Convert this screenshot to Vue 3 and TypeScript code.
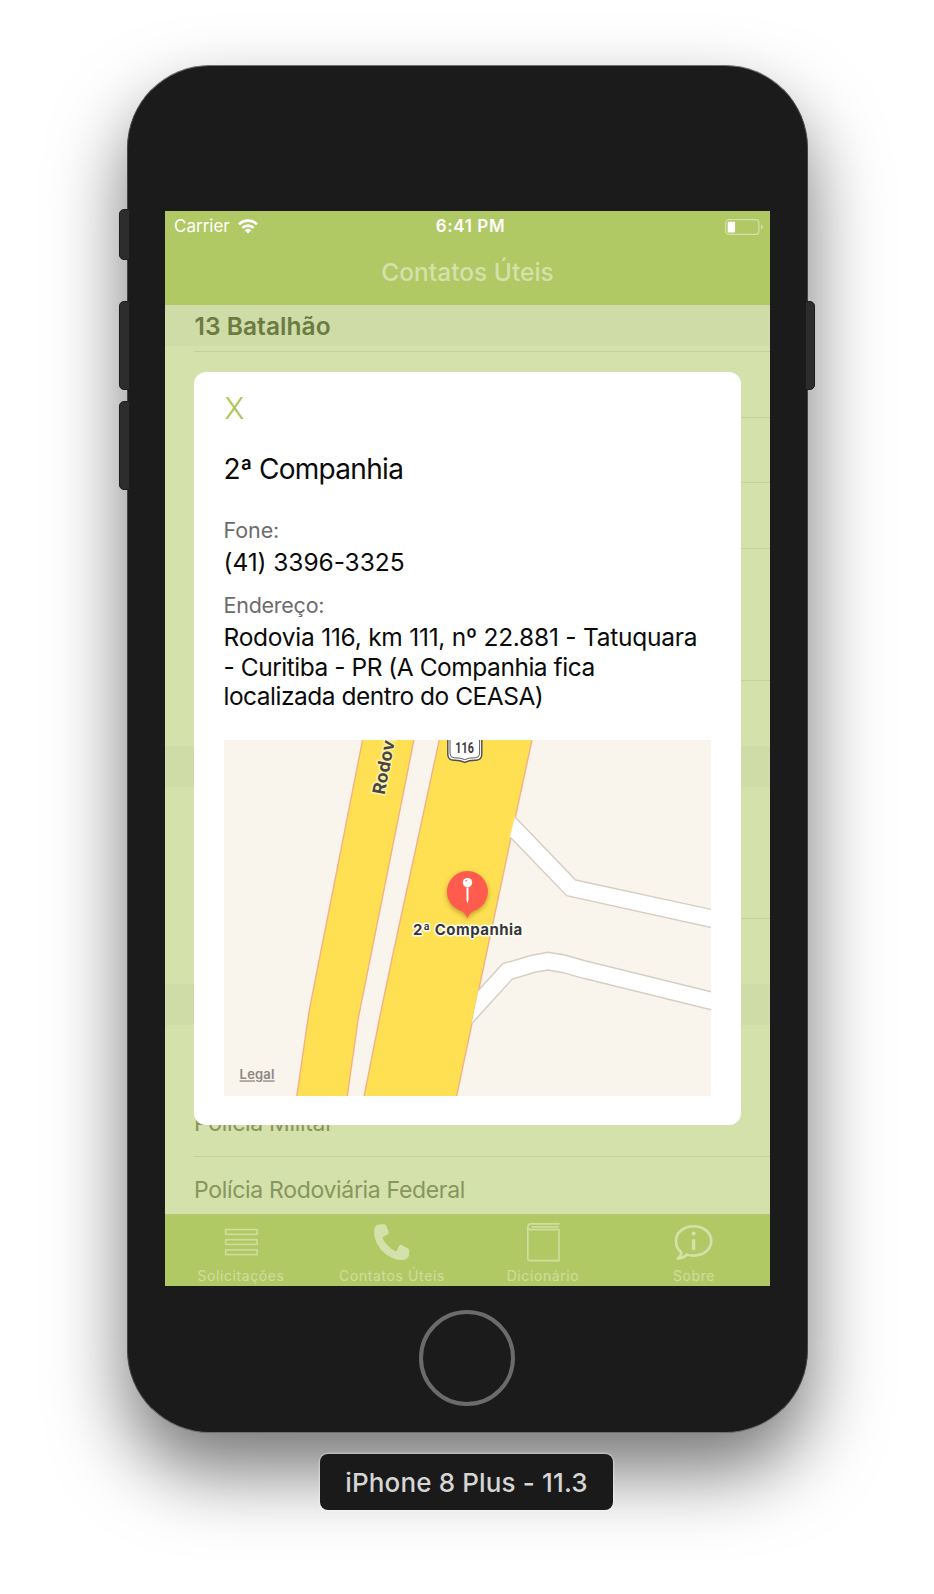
<script setup lang="ts">
interface ListItem {
  kind: 'header' | 'row'
  text?: string
  height: number
  line?: boolean
}

const items: ListItem[] = [
  { kind: 'header', text: '13 Batalhão', height: 41 },
  { kind: 'row', height: 6, line: true },
  { kind: 'row', height: 66, line: true },
  { kind: 'row', height: 65, line: true },
  { kind: 'row', height: 66, line: true },
  { kind: 'row', height: 66 },
  { kind: 'row', height: 66, line: true },
  { kind: 'row', height: 65 },
  { kind: 'header', height: 41 },
  { kind: 'row', height: 66 },
  { kind: 'row', height: 66, line: true },
  { kind: 'row', height: 65 },
  { kind: 'header', height: 41 },
  { kind: 'row', height: 66 },
  { kind: 'row', text: 'Polícia Militar', height: 66, line: true },
  { kind: 'row', text: 'Polícia Rodoviária Federal', height: 66 },
]

const tabs = [
  { id: 'requests', label: 'Solicitações' },
  { id: 'contacts', label: 'Contatos Úteis' },
  { id: 'dictionary', label: 'Dicionário' },
  { id: 'about', label: 'Sobre' },
]

const contact = {
  name: '2ª Companhia',
  phone: '(41) 3396-3325',
  address: [
    'Rodovia 116, km 111, nº 22.881 - Tatuquara',
    '- Curitiba - PR (A Companhia fica',
    'localizada dentro do CEASA)',
  ],
}
</script>

<template>
  <main class="stage">
    <div class="phone">
      <i class="key mute"></i>
      <i class="key vol-up"></i>
      <i class="key vol-down"></i>
      <i class="key power"></i>

      <section class="screen">
        <header class="status">
          <div class="carrier">
            <span>Carrier</span>
            <svg class="wifi" viewBox="0 0 20 15" width="20" height="15">
              <g fill="none" stroke="#fff" stroke-width="2.7">
                <path d="M1 5.4A12.7 12.7 0 0 1 19 5.4" />
                <path d="M4.3 8.9A8.1 8.1 0 0 1 15.7 8.9" />
              </g>
              <path d="M6.7 11.2A4.7 4.7 0 0 1 13.3 11.2L10 14.6Z" fill="#fff" />
            </svg>
          </div>
          <span class="time">6:41 PM</span>
          <svg class="battery" viewBox="0 0 38 16" width="38" height="16">
            <rect x=".7" y=".7" width="33.2" height="14.6" rx="3" fill="none" stroke="#d3e0a8" stroke-width="1.2" />
            <rect x="2.7" y="2.7" width="7.4" height="10.7" rx="1" fill="#fff" />
            <path d="M36 5.4Q37.9 6.2 37.9 8T36 10.6Z" fill="#d3e0a8" />
          </svg>
        </header>
        <h1 class="title">Contatos Úteis</h1>

        <div class="list">
          <div
            v-for="(item, i) in items"
            :key="i"
            :class="['item', item.kind, { line: item.line }]"
            :style="{ height: item.height + 'px' }"
          >
            <span v-if="item.text">{{ item.text }}</span>
          </div>
        </div>

        <nav class="tabs">
          <div v-for="tab in tabs" :key="tab.id" class="tab">
            <svg viewBox="0 0 40 42" width="40" height="42">
              <g v-if="tab.id === 'requests'" fill="none" stroke="#cfdd9e" stroke-width="1.6">
                <rect x="4.7" y="9.6" width="31.4" height="4.7" />
                <rect x="4.7" y="19.7" width="31.4" height="4.7" />
                <rect x="4.7" y="29.9" width="31.4" height="4.7" />
              </g>
              <path
                v-else-if="tab.id === 'contacts'"
                fill="#d4e1aa"
                d="M2.1 10.5Q2.4 6 5.6 4.7Q8.5 4 12 4.3Q14 4.6 14.8 6.7L16.8 12.4Q17 14 15.4 14.6L10.9 17Q10.2 17.6 10.6 18.4Q12 21.6 15.4 25Q19 29 23.2 31.3Q24.4 31.7 24.8 30.6L27.2 25.6Q28 24.5 29.4 25L35.8 28.2Q37.2 29 37.3 31Q37.5 35.5 36.2 37.2Q34 39.8 31 39.9Q25.5 40.4 20.5 38.2Q9.5 33 4.6 22.7Q1.8 17 2.1 10.5Z"
              />
              <g v-else-if="tab.id === 'dictionary'" fill="none" stroke="#d0de9f" stroke-width="1.6">
                <path d="M36.6 3.9H7.4Q4.8 4.2 4.8 6.8V38Q4.8 40.6 7 40.6H36V9.6H7Q4.9 9.2 4.8 6.8" />
                <path d="M35.5 6.9H8.5" stroke-width="1.7" />
              </g>
              <g v-else fill="none" stroke="#d4e1aa" stroke-width="2.6">
                <path
                  stroke-linejoin="round"
                  d="M7.2 32.2C3.9 29.6 2 25.7 2 21C2 12.4 9.8 6.2 19.6 6.2S37.2 12.4 37.2 21S29.4 35.6 19.6 35.6Q16 35.6 13.2 34.6Q8.6 38.6 3.6 38.7Q7.4 36.2 7.2 32.2Z"
                />
                <circle cx="19.6" cy="13.4" r="2" fill="#d4e1aa" stroke="none" />
                <path d="M19.6 19.3V29.9" stroke-width="3.4" />
              </g>
            </svg>
            <span>{{ tab.label }}</span>
          </div>
        </nav>

        <article class="card">
          <button class="close">X</button>
          <h2 class="name">{{ contact.name }}</h2>
          <p class="label phone-label">Fone:</p>
          <p class="value phone-value">{{ contact.phone }}</p>
          <p class="label address-label">Endereço:</p>
          <div class="value address">
            <p v-for="(part, i) in contact.address" :key="i" :class="'part' + i">{{ part }}</p>
          </div>
          <svg class="map" viewBox="224 740 487 356" width="487" height="356">
            <defs>
              <filter id="pinShadow" x="-40%" y="-40%" width="180%" height="180%">
                <feDropShadow dx="0" dy="2" stdDeviation="2.5" flood-color="#7a5a00" flood-opacity=".5" />
              </filter>
            </defs>
            <rect x="224" y="740" width="487" height="356" fill="#f9f4ec" />
            <path
              d="M363 738L309.3 1010L296.5 1098H347L358.3 1018L414.3 738Z"
              fill="#ffe052" stroke="#f4b183" stroke-width="1.4"
            />
            <path
              d="M439.7 738L391.5 961L380 1016L363.8 1098H456.2L472 1023.3L478.7 990L515.3 817.3L532.4 738Z"
              fill="#ffe052" stroke="#f4b183" stroke-width="1.4"
            />
            <path d="M514.800 816.8L575.7 880L713 909.8V928L566.7 895.7L509.800 837.3Z" fill="#fff" />
            <path
              d="M478.3 990.5L502.7 963.7L531.7 955.3L548 952.3L565 955L585 960.7L713 992.2V1010.2L583.3 978.3L563.3 972.7L548 970L535 972.3L512.3 979L471.6 1023.6Z"
              fill="#fff"
            />
            <g fill="none" stroke="#d6cdc3" stroke-width="1.4">
              <path d="M515.3 817.3L575.7 880L713 909.8" />
              <path d="M510.3 837.3L566.7 895.7L713 928" />
              <path d="M478.3 990.5L502.7 963.7L531.7 955.3L548 952.3L565 955L585 960.7L713 992.2" />
              <path d="M472 1023.3L512.3 979L535 972.3L548 970L563.3 972.7L583.3 978.3L713 1010.2" />
            </g>
            <text class="road" transform="translate(384.4 795.2) rotate(-79)">Rodovia</text>
            <path
              d="M447.8 736V754.5Q448 760 454 760.2Q460 760 464.7 762.4Q469.5 760 475.5 760.2Q481.6 760 481.8 754.5V736Z"
              fill="#fff" stroke="#4d4d4d" stroke-width="1.4"
            />
            <path
              d="M450 736V754Q450.2 757.6 454.4 757.8Q460.5 757.6 464.7 759.6Q469 757.6 475.2 757.8Q479.4 757.6 479.6 754V736"
              fill="none" stroke="#5c5c5c" stroke-width="1"
            />
            <text class="shield" x="464.6" y="752.9" text-anchor="middle" textLength="18.5" lengthAdjust="spacingAndGlyphs">116</text>
            <path
              filter="url(#pinShadow)"
              d="M467.4 918.4Q465.8 913.6 461.5 911.2A20.5 20.5 0 1 1 473.3 911.2Q469 913.6 467.4 918.4Z"
              fill="#ff5c4d"
            />
            <circle cx="467.5" cy="882.6" r="4.7" fill="#fff" />
            <circle cx="466.2" cy="880.7" r="1" fill="#ff8a80" />
            <path d="M466.5 887.5H468.5V900L467.5 903.4L466.5 900Z" fill="#fff" />
            <text class="place" x="467.9" y="934.6" text-anchor="middle">2ª Companhia</text>
            <text class="legal" x="239.6" y="1079.4">Legal</text>
          </svg>
        </article>
      </section>

      <div class="home"></div>
    </div>
    <div class="device">iPhone 8 Plus - 11.3</div>
  </main>
</template>

<style>
body {
  margin: 0;
  background: #fff;
}
</style>

<style scoped>
.stage {
  box-sizing: border-box;
  width: 934px;
  height: 1594px;
  padding-top: 65px;
  overflow: hidden;
  display: flex;
  flex-direction: column;
  align-items: center;
  background: #fff;
  font-family: Inter, 'Liberation Sans', sans-serif;
}
h1, h2, p {
  margin: 0;
  font-weight: 400;
}
.phone {
  position: relative;
  box-sizing: border-box;
  flex: none;
  width: 681px;
  height: 1368px;
  padding: 145px 0 0;
  display: flex;
  flex-direction: column;
  align-items: center;
  border: 1px solid #6f6f6f;
  border-left-color: #444;
  border-right-color: #444;
  border-radius: 83px;
  background: #1b1b1b;
  box-shadow: 0 38px 76px rgba(0, 0, 0, 0.54);
}
.key {
  position: absolute;
  box-sizing: border-box;
  left: -9px;
  width: 11px;
  height: 89px;
  border: 1px solid #1c1c1c;
  border-radius: 5px 0 0 5px;
  background: #2d2d2d;
}
.mute { top: 143px; height: 51px; }
.vol-up { top: 235px; }
.vol-down { top: 335px; }
.power {
  left: auto;
  right: -8px;
  top: 235px;
  width: 10px;
  border-radius: 0 5px 5px 0;
}
.screen {
  position: relative;
  width: 605px;
  height: 1075px;
  flex: none;
  display: flex;
  flex-direction: column;
  background: #d4e1aa;
}
.status {
  display: grid;
  grid-template-columns: 1fr auto 1fr;
  align-items: center;
  height: 30px;
  background: #b0c964;
  color: #fff;
  font-size: 17px;
  line-height: 31px;
}
.carrier {
  display: flex;
  align-items: center;
  gap: 8px;
  padding-left: 9.5px;
}
.time {
  font-weight: 600;
  letter-spacing: 0.6px;
  padding-left: 7px;
}
.battery {
  justify-self: end;
  margin-right: 7px;
}
.title {
  height: 64px;
  line-height: 62px;
  padding-left: 1px;
  background: #b0c964;
  color: #d4e1aa;
  text-align: center;
  font-size: 24.5px;
  font-weight: 500;
}
.list {
  flex: 1;
  min-height: 0;
  overflow: hidden;
}
.item {
  box-sizing: border-box;
  display: flex;
  align-items: center;
  padding-left: 30px;
  white-space: nowrap;
}
.header {
  background: #d0dca7;
  color: #6b7b41;
  font-size: 24.5px;
  font-weight: 600;
  letter-spacing: 0.05px;
}
.row {
  padding: 0 0 1px;
  margin-left: 29px;
  color: #86965c;
  font-size: 23px;
  letter-spacing: -0.32px;
}
.row span { margin-left: 0.5px; }
.line {
  border-bottom: 1px solid #c4d19b;
}
.tabs {
  box-sizing: border-box;
  flex: none;
  display: grid;
  grid-template-columns: repeat(4, 1fr);
  height: 72px;
  padding-left: 1px;
  border-top: 1px solid #b5c57e;
  background: #b0c964;
}
.tab {
  display: flex;
  flex-direction: column;
  align-items: center;
  padding-top: 5px;
  color: #d0dda1;
  font-size: 14px;
  font-weight: 400;
  line-height: 20px;
  letter-spacing: 0.6px;
}
.tab svg { flex: none; }
.tab span {
  height: 20px;
  margin-top: 4px;
}
.card {
  position: absolute;
  box-sizing: border-box;
  left: 29px;
  top: 161px;
  width: 547px;
  height: 753px;
  padding: 19px 30px 0;
  border-radius: 12px;
  background: #fff;
  color: #0b0b0b;
  white-space: nowrap;
}
.close {
  display: block;
  height: 36px;
  margin: -1px 0 0 1px;
  padding: 0;
  border: 0;
  background: none;
  color: #a9c750;
  font: 350 30px/36px Inter, sans-serif;
}
.name {
  margin: 26px 0 0;
  font-size: 28px;
  line-height: 34px;
  letter-spacing: -0.7px;
}
.label {
  color: #6c6c6c;
  font-size: 21.5px;
  line-height: 26px;
}
.phone-label {
  margin-top: 31px;
  letter-spacing: -0.1px;
}
.address-label {
  margin-top: 15px;
  letter-spacing: -0.25px;
}
.value {
  font-size: 24.5px;
  line-height: 29.3px;
}
.phone-value {
  margin: 5px 0 0;
  letter-spacing: -0.06px;
}
.address { margin: 5px 0 0; }
.part0 { letter-spacing: -0.25px; }
.part1 { letter-spacing: -0.47px; }
.part2 { letter-spacing: -0.5px; }
.map {
  display: block;
  margin-top: 29px;
}
.road {
  font-size: 17.5px;
  font-weight: 700;
  letter-spacing: 0.2px;
  fill: #464646;
  stroke: #fff0a8;
  stroke-width: 3px;
  paint-order: stroke;
}
.shield {
  font: 700 14px Roboto, sans-serif;
  fill: #3d3d3d;
}
.place {
  font-size: 15px;
  font-weight: 700;
  letter-spacing: 0.47px;
  fill: #35373a;
  stroke: #fffdf2;
  stroke-width: 3px;
  stroke-linejoin: round;
  paint-order: stroke;
}
.legal {
  font-size: 13px;
  font-weight: 600;
  letter-spacing: 0.2px;
  fill: #8c8882;
  text-decoration: underline;
}
.home {
  box-sizing: border-box;
  width: 96px;
  height: 96px;
  margin-top: 24px;
  border: 4px solid #6b6b6b;
  border-radius: 50%;
}
.device {
  position: relative;
  box-sizing: border-box;
  width: 293px;
  height: 56px;
  margin: 21px 1px 0 0;
  border-radius: 8px;
  background: #1a1a1a;
  box-shadow: 0 0 0 1.5px rgba(255, 255, 255, 0.28);
  color: #d5d5d5;
  text-align: center;
  font-size: 26px;
  font-weight: 500;
  line-height: 58px;
  letter-spacing: 0.15px;
}
</style>
